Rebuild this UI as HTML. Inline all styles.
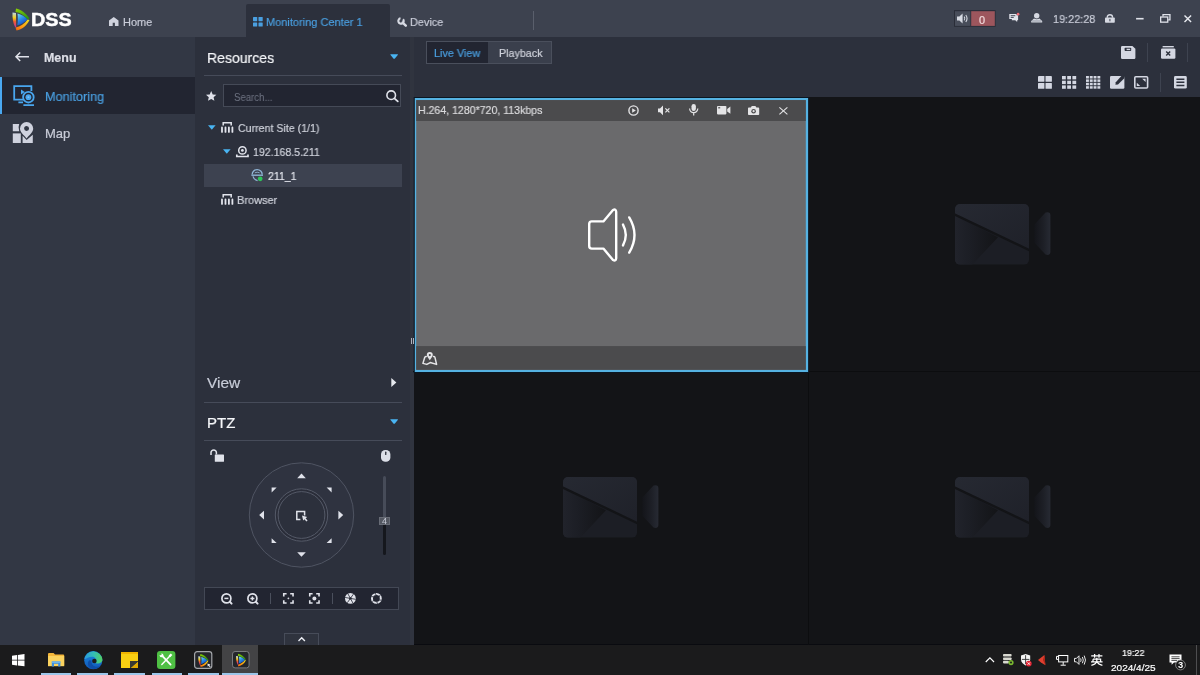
<!DOCTYPE html>
<html><head><meta charset="utf-8"><title>DSS</title>
<style>
*{box-sizing:border-box;margin:0;padding:0}
html,body{width:1200px;height:675px;overflow:hidden;background:#131417;font-family:"Liberation Sans",sans-serif;color:#d8dae0}
.a{position:absolute}
.t{position:absolute;white-space:nowrap;line-height:1;transform-origin:0 0;will-change:transform}
svg{position:absolute;overflow:visible}
</style></head><body>
<!-- backgrounds -->
<div class="a" style="left:0;top:0;width:1200px;height:37px;background:#3d424f"></div>
<div class="a" style="left:246px;top:4px;width:144px;height:33px;background:#2c303c;border-radius:2px 2px 0 0"></div>
<div class="a" style="left:533px;top:11px;width:1px;height:19px;background:#5a5f6c"></div>
<div class="a" style="left:0;top:37px;width:195px;height:608px;background:#323744"></div>
<div class="a" style="left:0;top:77px;width:195px;height:37px;background:#222531"></div>
<div class="a" style="left:0;top:77px;width:2px;height:37px;background:#4aa8f0"></div>
<div class="a" style="left:195px;top:37px;width:215px;height:608px;background:#2c303c"></div>
<div class="a" style="left:410px;top:37px;width:4px;height:608px;background:#30343f"></div>
<div class="a" style="left:414px;top:37px;width:786px;height:60px;background:#2c303c"></div>
<div class="a" style="left:414px;top:97px;width:786px;height:548px;background:#131417"></div>
<div class="a" style="left:414px;top:643.5px;width:786px;height:1.5px;background:#0a0b10"></div>
<div class="a" style="left:0;top:645px;width:1200px;height:30px;background:#1b1b1c"></div>
<!-- resources panel -->
<div class="a" style="left:204px;top:75px;width:198px;height:1px;background:#464b59"></div>
<div class="a" style="left:223.4px;top:84.4px;width:178px;height:23px;background:#222531;border:1px solid #454a57"></div>
<div class="a" style="left:204px;top:164px;width:198px;height:23.4px;background:#3d4250"></div>
<div class="a" style="left:204px;top:402px;width:198px;height:1px;background:#464b59"></div>
<div class="a" style="left:204px;top:440px;width:198px;height:1px;background:#464b59"></div>
<div class="a" style="left:204px;top:587px;width:195px;height:23px;background:#222531;border:1px solid #434855"></div>
<div class="a" style="left:270px;top:593px;width:1px;height:11px;background:#4a4f5c"></div>
<div class="a" style="left:332px;top:593px;width:1px;height:11px;background:#4a4f5c"></div>
<div class="a" style="left:284px;top:633px;width:35px;height:12px;background:#2f333e;border:1px solid #474c59;border-bottom:none"></div>
<!-- live view buttons -->
<div class="a" style="left:426px;top:41px;width:126px;height:23px;background:#3a3f4c;border:1px solid #4a4f5c"></div>
<div class="a" style="left:427px;top:42px;width:61px;height:21px;background:#222531"></div>
<!-- toolbar separators -->
<div class="a" style="left:1147px;top:43px;width:1px;height:19px;background:#3e4350"></div>
<div class="a" style="left:1187px;top:43px;width:1px;height:19px;background:#3e4350"></div>
<div class="a" style="left:1160px;top:73px;width:1px;height:19px;background:#3e4350"></div>
<!-- title alarm box -->
<svg style="left:950px;top:8px" width="50" height="22" viewBox="950 8 50 22"><rect x="954" y="10.1" width="41.6" height="16.7" fill="#2a2d38"/><rect x="955" y="11.2" width="15.4" height="14.7" fill="#484d5a"/><rect x="971.2" y="11.2" width="23.6" height="14.7" fill="#9d565d"/></svg>
<!-- grid dividers -->
<div class="a" style="left:808px;top:97px;width:1px;height:548px;background:#0c0d0f"></div>
<div class="a" style="left:413px;top:371px;width:787px;height:1px;background:#0c0d0f"></div>
<!-- video pane 1 -->
<svg style="left:410px;top:94px" width="404" height="284" viewBox="410 94 404 284">
<rect x="413.7" y="97" width="395.3" height="276" fill="#0a1622"/>
<rect x="414.8" y="98" width="393.3" height="274" fill="#55b2e2"/>
<rect x="416.2" y="100.1" width="389.6" height="269.7" fill="#6a6a6c"/>
<rect x="416.2" y="100.1" width="389.6" height="20.9" fill="#4b4b4d"/>
<rect x="416.2" y="346.1" width="389.6" height="23.7" fill="#4b4b4d"/>
</svg>
<!-- taskbar -->
<div class="a" style="left:222px;top:645px;width:36px;height:30px;background:#434345"></div>
<div class="a" style="left:41px;top:673px;width:30px;height:2px;background:#9cc6ea"></div>
<div class="a" style="left:77px;top:673px;width:31px;height:2px;background:#9cc6ea"></div>
<div class="a" style="left:114px;top:673px;width:31px;height:2px;background:#9cc6ea"></div>
<div class="a" style="left:152px;top:673px;width:30px;height:2px;background:#9cc6ea"></div>
<div class="a" style="left:188px;top:673px;width:31px;height:2px;background:#9cc6ea"></div>
<div class="a" style="left:222px;top:673px;width:36px;height:2px;background:#9cc6ea"></div>
<!-- show desktop --><div class="a" style="left:1196px;top:645px;width:1px;height:30px;background:#4e4e50"></div>
<!-- DSS logo -->
<svg style="left:12px;top:7.5px" width="18" height="23" viewBox="0 0 18 23">
<defs>
<linearGradient id="lg1" x1="0" y1="0" x2="1" y2="1"><stop offset="0" stop-color="#8fd400"/><stop offset="1" stop-color="#1f8a1a"/></linearGradient>
<linearGradient id="lg2" x1="1" y1="0" x2="0" y2="1"><stop offset="0" stop-color="#e8e020"/><stop offset="0.6" stop-color="#ff9a10"/><stop offset="1" stop-color="#f06010"/></linearGradient>
<linearGradient id="lg3" x1="0" y1="0" x2="0" y2="1"><stop offset="0" stop-color="#b8d8f0"/><stop offset="0.35" stop-color="#f0d020"/><stop offset="0.6" stop-color="#f06030"/><stop offset="1" stop-color="#c030a0"/></linearGradient>
<linearGradient id="lg4" x1="0" y1="0" x2="0.6" y2="1"><stop offset="0" stop-color="#7fe0f0"/><stop offset="0.5" stop-color="#2a8fe8"/><stop offset="1" stop-color="#1040c0"/></linearGradient>
</defs>
<path d="M4 0.5 C9 1.5 14.5 5.5 17.5 10.5 L15.5 11.5 C12 7 8 4.5 3.5 4 Z" fill="url(#lg1)"/>
<path d="M17.5 12 C15 17.5 10 21.5 4.5 22.5 L3.5 19.5 C8.5 18.5 12.5 16 15.5 11.5 Z" fill="url(#lg2)"/>
<path d="M0.5 4.5 L4 5 L4.2 19.5 L3 19 C1 15 0.3 10 0.5 4.5 Z" fill="url(#lg3)"/>
<path d="M5.5 5.5 C9.5 6.5 13 8.5 15.5 11.5 C12.5 14.5 9 16.8 5.3 17.3 C6 13.5 6 9.5 5.5 5.5 Z" fill="url(#lg4)"/>
</svg>
<!-- home -->
<svg style="left:109.3px;top:17.1px" width="9.5" height="9.1" viewBox="0 0 9.5 9.1"><path d="M4.75 0 L9.5 3.5 V9.1 H5.9 V5.7 H3.7 V9.1 H0 V3.5 Z" fill="#d0d3de"/></svg>
<!-- grid blue -->
<svg style="left:252.6px;top:17px" width="10" height="10" viewBox="0 0 10 10"><g fill="#4a9fe0"><rect x="0" y="0" width="4.2" height="4.2" rx="0.6"/><rect x="5.5" y="0" width="4.2" height="4.2" rx="0.6"/><rect x="0" y="5.4" width="4.2" height="4.2" rx="0.6"/><rect x="5.5" y="5.4" width="4.2" height="4.2" rx="0.6"/></g></svg>
<!-- wrench -->
<svg style="left:396.8px;top:16.9px" width="10" height="10" viewBox="0 0 10 10"><path d="M6.07 2.26 A2.7 2.7 0 1 1 3.53 1.34" fill="none" stroke="#d6d9e2" stroke-width="2.1"/><path d="M5.6 5.7 L8.8 8.7" stroke="#d6d9e2" stroke-width="2.5" stroke-linecap="round"/></svg>
<!-- alarm speaker -->
<svg style="left:957px;top:13px" width="12" height="11" viewBox="0 0 12 11"><path d="M0 3.6 H2.4 L5.6 0.6 V10.4 L2.4 7.4 H0 Z" fill="#d6d9e2"/><path d="M7.2 3.6 Q8.6 5.5 7.2 7.4 M8.8 2 Q11.3 5.5 8.8 9" fill="none" stroke="#d6d9e2" stroke-width="1.1"/></svg>
<!-- message -->
<svg style="left:1009.2px;top:13.2px" width="10.8" height="9.6" viewBox="0 0 11.4 10"><path d="M0.3 1 H8 V2.3 H9.6 V7.6 H8.6 V9.4 L6.6 7.6 H3 V6.4 H0.3 Z" fill="#e2e4ec"/><path d="M1.8 2.8 H6.6 M1.8 4.6 H5" stroke="#3d424f" stroke-width="1"/><circle cx="9.6" cy="1.2" r="1.4" fill="#ee6a76"/></svg>
<!-- person -->
<svg style="left:1030.8px;top:13.3px" width="11.4" height="9.6" viewBox="0 0 11.4 9.6"><circle cx="5.7" cy="2.7" r="2.7" fill="#d6d9e2"/><path d="M3 5.6 Q5.7 7 8.4 5.6 L11.2 8 V9.6 H0.2 V8 Z" fill="#d6d9e2"/><path d="M1 8 H10.4" stroke="#6a6f7c" stroke-width="0.6"/></svg>
<!-- lock -->
<svg style="left:1105px;top:14px" width="9.8" height="8.8" viewBox="0 0 9.8 8.8"><path d="M2.3 3.8 V2.9 A2.6 2.2 0 0 1 7.5 2.9 V3.8" fill="none" stroke="#d6d9e2" stroke-width="1.4"/><rect x="0" y="3.4" width="9.8" height="5.4" rx="0.8" fill="#d6d9e2"/><rect x="4.3" y="4.9" width="1.2" height="2.4" fill="#565b68"/></svg>
<!-- min/restore/close -->
<svg style="left:1136px;top:17px" width="8" height="4" viewBox="0 0 8 4"><rect x="0.1" y="0.9" width="7.5" height="1.6" fill="#e0e2ea"/></svg>
<svg style="left:1159.6px;top:13.8px" width="10.6" height="8.8" viewBox="0 0 10.6 8.8"><path d="M3 2.6 V0.65 H9.95 V5.8 H8.2" fill="none" stroke="#e0e2ea" stroke-width="1.3"/><rect x="0.65" y="3" width="7.1" height="5.15" fill="none" stroke="#e0e2ea" stroke-width="1.3"/></svg>
<svg style="left:1184.4px;top:14.8px" width="7.6" height="7.6" viewBox="0 0 7.6 7.6"><path d="M0.5 0.5 L7.1 7.1 M7.1 0.5 L0.5 7.1" stroke="#e8eaf0" stroke-width="1.4"/></svg>
<!-- back arrow -->
<svg style="left:14.6px;top:52.4px" width="14" height="9.6" viewBox="0 0 14 9.6"><path d="M14 4.8 H1.2 M5.2 0.5 L1 4.8 L5.2 9.1" fill="none" stroke="#e0e2ea" stroke-width="1.5"/></svg>
<!-- monitoring icon -->
<svg style="left:12.6px;top:84.6px" width="21.6" height="21.4" viewBox="0 0 21.6 21.4"><g fill="none" stroke="#49a6ee" stroke-width="1.8"><path d="M10 14.6 H1.2 V1.2 H18.4 V6"/><circle cx="15.4" cy="12.2" r="5.3"/><path d="M5.4 17.4 H10 M10.4 20.2 H21"/></g><circle cx="15.4" cy="12.2" r="2.9" fill="#49a6ee"/><circle cx="15.4" cy="12.2" r="0.9" fill="#7cc0f4"/><path d="M8 4.4 L11.8 7 L8 9.6 Z" fill="#49a6ee"/></svg>
<!-- map icon -->
<svg style="left:12.4px;top:122.2px" width="21.6" height="21.2" viewBox="0 0 21.6 21.2"><g fill="#cfd2de"><path d="M0.8 2 H7.2 Q5.8 5.4 7.2 9.2 H0.8 Z"/><rect x="0.8" y="11.4" width="8" height="9.6"/><path d="M10.6 21 V13.8 L14.6 18 L20.8 12.8 V21 Z"/><path d="M14.6 0 A6.6 6.6 0 0 1 21.2 6.6 C21.2 10.6 17 13.4 14.6 16.4 C12.2 13.4 8 10.6 8 6.6 A6.6 6.6 0 0 1 14.6 0 Z M14.6 4 A2.5 2.5 0 0 0 14.6 9 A2.5 2.5 0 0 0 14.6 4 Z" fill-rule="evenodd"/></g></svg>
<!-- resources header arrows -->
<svg style="left:389.7px;top:54.3px" width="8.3" height="5" viewBox="0 0 8.6 5.4"><path d="M0.6 0.3 H8 Q8.8 0.5 8.2 1.2 L4.9 5 Q4.3 5.5 3.7 5 L0.4 1.2 Q-0.2 0.5 0.6 0.3 Z" fill="#49b4f2"/></svg>
<svg style="left:391.2px;top:378.3px" width="5.4" height="9" viewBox="0 0 5.4 9"><path d="M0.3 0 L5.4 4.5 L0.3 9 Z" fill="#e6e8ee"/></svg>
<svg style="left:389.7px;top:419px" width="8.3" height="5" viewBox="0 0 8.6 5.4"><path d="M0.6 0.3 H8 Q8.8 0.5 8.2 1.2 L4.9 5 Q4.3 5.5 3.7 5 L0.4 1.2 Q-0.2 0.5 0.6 0.3 Z" fill="#49b4f2"/></svg>
<!-- star -->
<svg style="left:206.4px;top:91.4px" width="10.4" height="9.8" viewBox="0 0 10.4 9.8"><path d="M5.2 0 L6.7 3.4 L10.4 3.75 L7.6 6.2 L8.4 9.8 L5.2 7.9 L2 9.8 L2.8 6.2 L0 3.75 L3.7 3.4 Z" fill="#e0e2ea"/></svg>
<!-- magnifier -->
<svg style="left:386px;top:90.4px" width="12.6" height="12" viewBox="0 0 12.6 12"><circle cx="5.2" cy="5.2" r="4.3" fill="none" stroke="#e0e2ea" stroke-width="1.6"/><path d="M8.4 8.4 L11.8 11.4" stroke="#e0e2ea" stroke-width="1.8" stroke-linecap="round"/></svg>
<!-- tree arrows -->
<svg style="left:208px;top:125.4px" width="7.6" height="4.8" viewBox="0 0 7.6 4.8"><path d="M0 0.2 H7.6 L3.8 4.8 Z" fill="#49b4f2"/></svg>
<svg style="left:223px;top:149.3px" width="7.6" height="4.8" viewBox="0 0 7.6 4.8"><path d="M0 0.2 H7.6 L3.8 4.8 Z" fill="#49b4f2"/></svg>
<!-- site icons -->
<svg style="left:221px;top:122.2px" width="12.4" height="10" viewBox="0 0 12.4 10"><g fill="none" stroke="#e2e4ec"><path d="M2.2 3.6 V0.8 H10.2 V3.6" stroke-width="1.5"/><path d="M1 5.4 V9.9 M4.5 5.4 V9.9 M7.9 5.4 V9.9 M11.4 5.4 V9.9" stroke-width="1.8" stroke-linecap="round"/></g></svg>
<svg style="left:221px;top:194.2px" width="12.4" height="10" viewBox="0 0 12.4 10"><g fill="none" stroke="#e2e4ec"><path d="M2.2 3.6 V0.8 H10.2 V3.6" stroke-width="1.5"/><path d="M1 5.4 V9.9 M4.5 5.4 V9.9 M7.9 5.4 V9.9 M11.4 5.4 V9.9" stroke-width="1.8" stroke-linecap="round"/></g></svg>
<!-- device icon -->
<svg style="left:236.2px;top:146.4px" width="12.8" height="11.4" viewBox="0 0 12.8 11.4"><circle cx="6.4" cy="4.4" r="3.7" fill="none" stroke="#e2e4ec" stroke-width="1.5"/><circle cx="6.4" cy="4.4" r="1.4" fill="#e2e4ec"/><path d="M0.8 8.4 V10.5 H12 V8.4" fill="none" stroke="#e2e4ec" stroke-width="1.7"/></svg>
<!-- channel cam icon -->
<svg style="left:251px;top:169.4px" width="12.4" height="12.8" viewBox="0 0 12.4 12.8"><path d="M1.2 5.6 A5 5 0 0 1 11.2 5.6" fill="none" stroke="#8fb4d4" stroke-width="1.3"/><path d="M0.4 6.2 H12" stroke="#8fb4d4" stroke-width="1.4"/><path d="M2 7.4 Q3 11 6.6 11.6" fill="none" stroke="#8fb4d4" stroke-width="1.3"/><path d="M3.8 3.8 Q6.2 2.6 8.6 3.8" fill="none" stroke="#8fb4d4" stroke-width="0.9"/><circle cx="9.2" cy="9.8" r="2.4" fill="#2ec45a"/></svg>
<!-- PTZ lock/mouse -->
<svg style="left:210.4px;top:449.4px" width="14" height="12.8" viewBox="0 0 14 12.8"><path d="M1 6 V3.6 A2.7 2.7 0 0 1 6.4 3.6 V5.6" fill="none" stroke="#e0e2ea" stroke-width="1.5"/><rect x="4.8" y="5.4" width="9.2" height="7.4" rx="0.6" fill="#e0e2ea"/></svg>
<svg style="left:381px;top:449.6px" width="9.4" height="11.8" viewBox="0 0 9.4 11.8"><rect x="0" y="0" width="9.4" height="11.8" rx="4.4" fill="#dcdfe8"/><rect x="4.1" y="1.6" width="1.3" height="3.4" rx="0.6" fill="#2c303c"/></svg>
<!-- PTZ wheel -->
<svg style="left:245px;top:458px" width="114" height="114" viewBox="245 458 114 114">
<circle cx="301.5" cy="515" r="52.2" fill="#2f3340" stroke="#4f5462" stroke-width="1"/>
<circle cx="301.5" cy="515" r="26.2" fill="#2a2d39" stroke="#555a68" stroke-width="1"/>
<circle cx="301.5" cy="515" r="23.4" fill="#2c303c" stroke="#555a68" stroke-width="1"/>
<g fill="#e0e2ea">
<path d="M297.2 478.2 L305.8 478.2 L301.5 473.6 Z"/>
<path d="M297.2 552.2 L305.8 552.2 L301.5 556.8 Z"/>
<path d="M264 510.8 L264 519.4 L259.2 515.1 Z"/>
<path d="M338.4 510.8 L338.4 519.4 L343.2 515.1 Z"/>
<path d="M271.6 487.6 H276.6 L271.6 492.4 Z"/>
<path d="M331.6 487.6 H326.6 L331.6 492.4 Z"/>
<path d="M271.6 543 H276.6 L271.6 538.2 Z"/>
<path d="M331.6 543 H326.6 L331.6 538.2 Z"/>
</g>
<path d="M304.6 515.4 V511.4 H296.8 V519.4 H300.4" fill="none" stroke="#e0e2ea" stroke-width="1.5"/>
<path d="M302 515.6 L307.2 517 L305.6 518.2 L307.6 520.4 L306.4 521.4 L304.4 519.2 L303.2 520.6 Z" fill="#e0e2ea"/>
</svg>
<!-- slider -->
<div class="a" style="left:383px;top:476px;width:3px;height:42px;background:#474c59;border-radius:1.5px 1.5px 0 0"></div>
<div class="a" style="left:383px;top:518px;width:3px;height:36.5px;background:#15171d;border-radius:0 0 1.5px 1.5px"></div>
<div class="a" style="left:379.4px;top:516.6px;width:10.2px;height:8.2px;background:#535761;border:1px solid #686c76"></div>
<!-- PTZ toolbar icons -->
<svg style="left:220.8px;top:592.8px" width="11.6" height="11.6" viewBox="0 0 11.6 11.6"><circle cx="5.4" cy="5.4" r="4.5" fill="none" stroke="#e0e2ea" stroke-width="1.7"/><path d="M8.8 8.8 L10.6 10.6" stroke="#e0e2ea" stroke-width="2" stroke-linecap="round"/><path d="M3.4 5.4 H7.4" stroke="#e0e2ea" stroke-width="1.5"/></svg>
<svg style="left:246.8px;top:592.8px" width="11.6" height="11.6" viewBox="0 0 11.6 11.6"><circle cx="5.4" cy="5.4" r="4.5" fill="none" stroke="#e0e2ea" stroke-width="1.7"/><path d="M8.8 8.8 L10.6 10.6" stroke="#e0e2ea" stroke-width="2" stroke-linecap="round"/><path d="M3.4 5.4 H7.4 M5.4 3.4 V7.4" stroke="#e0e2ea" stroke-width="1.5"/></svg>
<svg style="left:283.2px;top:592.8px" width="10.8" height="10.8" viewBox="0 0 11.4 11.4"><path d="M0.8 3.8 V0.8 H3.8 M7.6 0.8 H10.6 V3.8 M10.6 7.6 V10.6 H7.6 M3.8 10.6 H0.8 V7.6" fill="none" stroke="#e0e2ea" stroke-width="1.7"/><path d="M5.7 4.8 V6.6 M4.8 5.7 H6.6" stroke="#e0e2ea" stroke-width="0.9"/></svg>
<svg style="left:309px;top:592.8px" width="10.8" height="10.8" viewBox="0 0 11.4 11.4"><path d="M0.8 3.8 V0.8 H3.8 M7.6 0.8 H10.6 V3.8 M10.6 7.6 V10.6 H7.6 M3.8 10.6 H0.8 V7.6" fill="none" stroke="#e0e2ea" stroke-width="1.7"/><circle cx="5.7" cy="5.7" r="2.1" fill="#e0e2ea"/></svg>
<svg style="left:345.2px;top:592.8px" width="10.8" height="10.8" viewBox="0 0 12 12"><circle cx="6" cy="6" r="6" fill="#e0e2ea"/><g stroke="#222531" stroke-width="0.9" fill="none"><path d="M6 6 L3.2 0.8 M6 6 L0.2 5 M6 6 L2.6 10.8 M6 6 L8.8 11.2 M6 6 L11.8 7 M6 6 L9.4 1.2"/></g><circle cx="6" cy="6" r="1.3" fill="#222531"/></svg>
<svg style="left:370.8px;top:592.8px" width="10.8" height="10.8" viewBox="0 0 12 12"><circle cx="6" cy="6" r="4.9" fill="none" stroke="#e0e2ea" stroke-width="2.2"/><g stroke="#222531" stroke-width="0.9" fill="none"><path d="M4.4 0 L6 2.6 M0.2 4 L3 4.2 M1.8 9.8 L3.2 7.4 M7.6 12 L6 9.4 M11.8 8 L9 7.8 M10.2 2.2 L8.8 4.6"/></g></svg>
<!-- collapse chevron -->
<svg style="left:298px;top:637px" width="7.4" height="4.4" viewBox="0 0 7.4 4.4"><path d="M0.5 4 L3.7 0.8 L6.9 4" fill="none" stroke="#eceef4" stroke-width="1.4"/></svg>
<!-- splitter handle -->
<div class="a" style="left:410.8px;top:338px;width:1px;height:6px;background:#b0b3be"></div>
<div class="a" style="left:412.6px;top:338px;width:1px;height:6px;background:#b0b3be"></div>
<!-- toolbar icons -->
<svg style="left:1121.2px;top:46.2px" width="14.4" height="13" viewBox="0 0 14.4 13"><path d="M1.2 0 H11.4 L14.4 2.8 V11.8 Q14.4 13 13.2 13 H1.2 Q0 13 0 11.8 V1.2 Q0 0 1.2 0 Z" fill="#d4d7e2"/><rect x="3.6" y="1.8" width="6.6" height="3.2" rx="0.8" fill="#2c303c"/><rect x="5.6" y="2.7" width="3.6" height="1.4" fill="#d4d7e2"/></svg>
<svg style="left:1161px;top:46.2px" width="14.4" height="12.8" viewBox="0 0 14.4 12.8"><rect x="1.6" y="0" width="11.2" height="1.4" fill="#d4d7e2"/><path d="M1.2 2.4 H13.2 Q14.4 2.4 14.4 3.6 V11.6 Q14.4 12.8 13.2 12.8 H1.2 Q0 12.8 0 11.6 V3.6 Q0 2.4 1.2 2.4 Z" fill="#d4d7e2"/><path d="M5.2 5.6 L9.2 9.6 M9.2 5.6 L5.2 9.6" stroke="#2c303c" stroke-width="1.4"/></svg>
<svg style="left:1038px;top:76.2px" width="14" height="12.8" viewBox="0 0 14 12.8"><g fill="#d4d7e2"><rect x="0" y="0" width="6.4" height="5.8" rx="0.5"/><rect x="7.5" y="0" width="6.4" height="5.8" rx="0.5"/><rect x="0" y="6.9" width="6.4" height="5.8" rx="0.5"/><rect x="7.5" y="6.9" width="6.4" height="5.8" rx="0.5"/></g></svg>
<svg style="left:1061.8px;top:76.2px" width="14.4" height="12.8" viewBox="0 0 14.4 12.8"><g fill="#d4d7e2"><rect x="0" y="0" width="3.8" height="3.4"/><rect x="5.2" y="0" width="3.8" height="3.4"/><rect x="10.4" y="0" width="3.8" height="3.4"/><rect x="0" y="4.7" width="3.8" height="3.4"/><rect x="5.2" y="4.7" width="3.8" height="3.4"/><rect x="10.4" y="4.7" width="3.8" height="3.4"/><rect x="0" y="9.4" width="3.8" height="3.4"/><rect x="5.2" y="9.4" width="3.8" height="3.4"/><rect x="10.4" y="9.4" width="3.8" height="3.4"/></g></svg>
<svg style="left:1086px;top:76.2px" width="14.4" height="12.8" viewBox="0 0 14.4 12.8"><g fill="#d4d7e2"><rect x="0" y="0" width="2.9" height="2.5"/><rect x="3.8" y="0" width="2.9" height="2.5"/><rect x="7.6" y="0" width="2.9" height="2.5"/><rect x="11.4" y="0" width="2.9" height="2.5"/><rect x="0" y="3.4" width="2.9" height="2.5"/><rect x="3.8" y="3.4" width="2.9" height="2.5"/><rect x="7.6" y="3.4" width="2.9" height="2.5"/><rect x="11.4" y="3.4" width="2.9" height="2.5"/><rect x="0" y="6.8" width="2.9" height="2.5"/><rect x="3.8" y="6.8" width="2.9" height="2.5"/><rect x="7.6" y="6.8" width="2.9" height="2.5"/><rect x="11.4" y="6.8" width="2.9" height="2.5"/><rect x="0" y="10.2" width="2.9" height="2.5"/><rect x="3.8" y="10.2" width="2.9" height="2.5"/><rect x="7.6" y="10.2" width="2.9" height="2.5"/><rect x="11.4" y="10.2" width="2.9" height="2.5"/></g></svg>
<svg style="left:1109.6px;top:76.2px" width="14.4" height="12.8" viewBox="0 0 14.4 12.8"><rect x="0" y="0" width="14.4" height="12.8" rx="1.2" fill="#d4d7e2"/><path d="M11.6 -0.2 L14.6 -0.2 L14.6 2 L8 8.4 L5.4 8.8 L5.8 6.2 Z" fill="#2c303c"/></svg>
<svg style="left:1133.6px;top:76.2px" width="14.4" height="12.8" viewBox="0 0 14.4 12.8"><rect x="0.8" y="0.8" width="12.8" height="11.2" rx="1" fill="none" stroke="#d4d7e2" stroke-width="1.6"/><path d="M8.2 2.8 H11.6 V6 Z M6.2 10 H2.8 V6.8 Z" fill="#d4d7e2"/></svg>
<svg style="left:1174.2px;top:76.4px" width="12.8" height="12.6" viewBox="0 0 12.8 12.6"><rect x="0" y="0" width="12.8" height="12.6" rx="1.4" fill="#d4d7e2"/><path d="M2.4 3.2 H10.4 M2.4 6.3 H10.4 M2.4 9.4 H10.4" stroke="#2c303c" stroke-width="1.5"/></svg>
<!-- video header icons -->
<svg style="left:628.2px;top:104.8px" width="11" height="11" viewBox="0 0 11 11"><circle cx="5.5" cy="5.5" r="4.6" fill="none" stroke="#e4e4e6" stroke-width="1.4"/><path d="M4.2 3.2 L7.8 5.5 L4.2 7.8 Z" fill="#e4e4e6"/></svg>
<svg style="left:657.6px;top:105px" width="12.4" height="10.6" viewBox="0 0 12.4 10.6"><path d="M0 3.4 H2 L5 0.4 V10.2 L2 7.2 H0 Z" fill="#e4e4e6"/><path d="M7.4 3.4 L11.4 7.4 M11.4 3.4 L7.4 7.4" stroke="#e4e4e6" stroke-width="1.2"/></svg>
<svg style="left:689.4px;top:104.4px" width="9.4" height="11.4" viewBox="0 0 9.4 11.4"><rect x="2.5" y="0" width="4.4" height="7" rx="2.2" fill="#e4e4e6"/><path d="M0.6 4.6 A4.1 4.1 0 0 0 8.8 4.6 M4.7 8.8 V11.4" fill="none" stroke="#e4e4e6" stroke-width="1.2"/></svg>
<svg style="left:717.2px;top:106.2px" width="13.4" height="8.4" viewBox="0 0 13.4 8.4"><rect x="0" y="0" width="9.4" height="8.4" rx="0.8" fill="#e4e4e6"/><path d="M10.2 3 L13.4 0.6 V7.8 L10.2 5.4 Z" fill="#e4e4e6"/><rect x="1.2" y="1.2" width="2" height="1.2" fill="#4b4b4d"/></svg>
<svg style="left:748px;top:106px" width="11.2" height="9" viewBox="0 0 11.2 9"><path d="M0.8 1.6 H2.8 L3.8 0 H7.4 L8.4 1.6 H10.4 Q11.2 1.6 11.2 2.4 V8.2 Q11.2 9 10.4 9 H0.8 Q0 9 0 8.2 V2.4 Q0 1.6 0.8 1.6 Z" fill="#e4e4e6"/><circle cx="5.6" cy="5.2" r="2.3" fill="#4b4b4d"/><circle cx="5.6" cy="5.2" r="1.1" fill="#e4e4e6"/></svg>
<svg style="left:779.2px;top:106.8px" width="8.8" height="7.8" viewBox="0 0 8.8 7.8"><path d="M0.4 0.4 L8.4 7.4 M8.4 0.4 L0.4 7.4" stroke="#e4e4e6" stroke-width="1.1"/></svg>
<!-- big speaker -->
<svg style="left:587px;top:207px" width="54" height="56" viewBox="587 207 54 56"><g fill="none" stroke="#ffffff" stroke-width="2.4" stroke-linejoin="round" stroke-linecap="round"><path d="M591.8 221.4 H603.4 L613 210 Q616 208.6 616.2 211.8 V258.2 Q616 261.4 613 260 L603.4 248.6 H591.8 Q589.2 248.6 589.2 246 V224 Q589.2 221.4 591.8 221.4 Z"/><path d="M623 224.6 Q628.6 235 623 245.4"/><path d="M629.2 217.4 Q639.8 235 629.2 252.6"/></g></svg>
<!-- footer map icon -->
<svg style="left:422px;top:352px" width="15.6" height="13.2" viewBox="0 0 15.6 13.2"><path d="M4.2 4.6 Q3 4.4 2.7 5.6 L0.9 11.4 L4.8 12.4 L8.2 10.6 L14.6 12.4 L13 5.6 Q12.8 4.4 11.6 4.6" fill="none" stroke="#e6e6e8" stroke-width="1.5" stroke-linejoin="round" stroke-linecap="round"/><path d="M7.8 0 A3 3 0 0 1 10.8 3 C10.8 4.8 8.8 6.4 7.8 8.2 C6.8 6.4 4.8 4.8 4.8 3 A3 3 0 0 1 7.8 0 Z M7.8 2 A1.1 1.1 0 0 0 7.8 4.2 A1.1 1.1 0 0 0 7.8 2 Z" fill="#e6e6e8" fill-rule="evenodd"/></svg>
<!-- camera placeholders -->
<svg width="0" height="0"><defs>
<linearGradient id="cg1" x1="0" y1="0" x2="1" y2="1"><stop offset="0" stop-color="#262932"/><stop offset="1" stop-color="#1f2129"/></linearGradient>
<linearGradient id="cg2" x1="0" y1="0" x2="1" y2="0"><stop offset="0" stop-color="#14151a"/><stop offset="0.55" stop-color="#1d1f26"/><stop offset="1" stop-color="#272a33"/></linearGradient>
<linearGradient id="cg3" x1="0" y1="0" x2="1" y2="0"><stop offset="0" stop-color="#21232b"/><stop offset="0.35" stop-color="#1c1e25"/><stop offset="1" stop-color="#131417"/></linearGradient>
<clipPath id="camclip"><rect x="0" y="0" width="74" height="60.6" rx="5"/></clipPath>
<g id="camph">
<g clip-path="url(#camclip)">
<rect x="0" y="0" width="74" height="61" fill="#1c1e25"/>
<path d="M0 0 H74 V44.7 L0 9.4 Z" fill="url(#cg1)"/>
<path d="M0 11.6 L43 33.2 L17 61 H0 Z" fill="url(#cg3)"/>
<path d="M0 9.4 L74 44.7 V47.2 L0 11.9 Z" fill="#131417"/>
</g>
<path d="M79.4 20.5 L90.5 8.6 Q95.4 7.4 95.4 11.4 V47.8 Q95.4 51.8 90.5 50.6 L79.4 38.7 Z" fill="url(#cg2)"/>
</g></defs></svg>
<svg style="left:955.2px;top:203.8px" width="96" height="61" viewBox="0 0 96 61"><use href="#camph"/></svg>
<svg style="left:563.4px;top:477px" width="96" height="61" viewBox="0 0 96 61"><use href="#camph"/></svg>
<svg style="left:955.4px;top:477px" width="96" height="61" viewBox="0 0 96 61"><use href="#camph"/></svg>
<!-- taskbar icons -->
<svg style="left:11.7px;top:653.7px" width="12.5" height="12.3" viewBox="0 0 12.8 12.6"><g fill="#ffffff"><path d="M0 1.8 L5.2 1 V6 H0 Z"/><path d="M6 0.9 L12.8 0 V6 H6 Z"/><path d="M0 6.7 H5.2 V11.7 L0 10.9 Z"/><path d="M6 6.7 H12.8 V12.6 L6 11.8 Z"/></g></svg>
<svg style="left:48px;top:653px" width="16.2" height="13.6" viewBox="0 0 16.2 13.6"><path d="M0 1 Q0 0 1 0 H5.6 L7 1.6 H15.2 Q16.2 1.6 16.2 2.6 V12.6 H0 Z" fill="#f5b73a"/><rect x="0" y="3" width="16.2" height="10.2" fill="#fbd35f"/><path d="M3.8 13.4 V8.4 H12.4 V13.4 H10.2 V10.8 H6 V13.4 Z" fill="#3f8fe0"/><rect x="3.8" y="8.4" width="8.6" height="1.6" fill="#6ab4f0"/></svg>
<svg style="left:84px;top:651px" width="18.6" height="18.4" viewBox="0 0 18.6 18.4"><defs><linearGradient id="eg1" x1="0" y1="0" x2="1" y2="0"><stop offset="0" stop-color="#2a9ae0"/><stop offset="0.55" stop-color="#35c0b0"/><stop offset="1" stop-color="#55d060"/></linearGradient><linearGradient id="eg2" x1="0" y1="0" x2="0" y2="1"><stop offset="0" stop-color="#1a8ae0"/><stop offset="1" stop-color="#1258b8"/></linearGradient></defs><circle cx="9.3" cy="9.2" r="9.1" fill="url(#eg2)"/><path d="M0.4 8 A9.1 9.1 0 0 1 18.4 8.6 C18.4 11.4 16 12.6 13.6 12.6 C11.8 12.6 11 11.6 11.6 10.4 C12.6 8.6 11.4 5.8 8.2 5.8 C4.6 5.8 1.4 8.4 0.4 8 Z" fill="url(#eg1)"/><path d="M7.6 9.4 C6.8 12.6 9.4 16 13.4 15.8 C14.8 15.7 16 15.2 16.8 14.6 C14.6 18 9.6 19 6 16.6 C3.4 14.8 3.2 11 5.4 9.2 Z" fill="#0e4ea8"/><circle cx="10.4" cy="10" r="2.3" fill="#1c1c1c"/></svg>
<svg style="left:121.4px;top:652px" width="17" height="16" viewBox="0 0 17 16"><rect x="0" y="0" width="17" height="16" fill="#f9cf12"/><rect x="0" y="0" width="17" height="2" fill="#f0b400"/><path d="M9 9 H17 V10 L10 16 H9 Z" fill="#3a3a32"/><path d="M17 10 V16 H10 Z" fill="#e0a800"/></svg>
<svg style="left:157.4px;top:651px" width="18.4" height="18" viewBox="0 0 18.4 18"><rect x="0" y="0" width="18.4" height="18" rx="3" fill="#4fc044"/><g stroke="#ffffff" stroke-width="1.8" stroke-linecap="round"><path d="M5 4.6 L13.6 13.6"/><path d="M13.4 4.4 L4.8 13.6" stroke-width="1.4"/></g><circle cx="4.6" cy="4.4" r="1.9" fill="#ffffff"/><circle cx="3.6" cy="3.2" r="1" fill="#4fc044"/><path d="M12.4 5.4 L14.6 3.2" stroke="#fff" stroke-width="2.2"/></svg>
<svg width="0" height="0"><defs><g id="dsslogo">
<path d="M4 0.5 C9 1.5 14.5 5.5 17.5 10.5 L15.5 11.5 C12 7 8 4.5 3.5 4 Z" fill="url(#lg1)"/>
<path d="M17.5 12 C15 17.5 10 21.5 4.5 22.5 L3.5 19.5 C8.5 18.5 12.5 16 15.5 11.5 Z" fill="url(#lg2)"/>
<path d="M0.5 4.5 L4 5 L4.2 19.5 L3 19 C1 15 0.3 10 0.5 4.5 Z" fill="url(#lg3)"/>
<path d="M5.5 5.5 C9.5 6.5 13 8.5 15.5 11.5 C12.5 14.5 9 16.8 5.3 17.3 C6 13.5 6 9.5 5.5 5.5 Z" fill="url(#lg4)"/>
</g></defs></svg>
<svg style="left:194px;top:651px" width="18.4" height="18" viewBox="0 0 18.4 18"><rect x="0.6" y="0.6" width="17.2" height="16.8" rx="2.6" fill="#24262b" stroke="#a4a6aa" stroke-width="1.2"/><g transform="translate(4,2.6) scale(0.6)"><use href="#dsslogo"/></g><path d="M13.4 12.6 L16.4 13.4 L15.4 14.2 L16.6 15.6 L15.8 16.2 L14.6 14.8 L13.8 15.8 Z" fill="#e8e8ea"/></svg>
<svg style="left:231.5px;top:651px" width="17.6" height="17.4" viewBox="0 0 17.6 17.4"><rect x="0.5" y="0.5" width="16.6" height="16.4" rx="2.6" fill="#24262b" stroke="#7a7b80" stroke-width="1"/><g transform="translate(3.8,2.4) scale(0.58)"><use href="#dsslogo"/></g></svg>
<!-- tray -->
<svg style="left:984.8px;top:657.2px" width="9.8" height="5.4" viewBox="0 0 9 5.2"><path d="M0.5 4.8 L4.5 0.8 L8.5 4.8" fill="none" stroke="#ffffff" stroke-width="1.1"/></svg>
<svg style="left:1003px;top:654.4px" width="11" height="11.4" viewBox="0 0 11 11.4"><g fill="#d8d8d0"><rect x="0" y="0" width="8.6" height="2.6" rx="0.8"/><rect x="0" y="3.4" width="8.6" height="2.6" rx="0.8"/><rect x="0" y="6.8" width="6" height="2.6" rx="0.8"/></g><circle cx="8" cy="8.6" r="2.6" fill="#7ab830"/><circle cx="8" cy="8.6" r="1" fill="#1c1c1c"/></svg>
<svg style="left:1021px;top:654.4px" width="11" height="12.6" viewBox="0 0 11 12.6"><path d="M4.6 0 L9.2 1.4 V5.6 C9.2 8.4 7 10.4 4.6 11.4 C2.2 10.4 0 8.4 0 5.6 V1.4 Z" fill="#f4f4f4"/><path d="M4.6 1.2 V10.2 M0.8 5.4 H8.4" stroke="#303030" stroke-width="0.9"/><circle cx="7.8" cy="9.6" r="2.9" fill="#e02030"/><path d="M6.6 8.4 L9 10.8 M9 8.4 L6.6 10.8" stroke="#ffffff" stroke-width="0.9"/></svg>
<svg style="left:1038.4px;top:655px" width="7.4" height="10.2" viewBox="0 0 7.4 10.2"><path d="M0 5 L6.4 0 L7.4 10.2 L3 7.4 Z" fill="#e04030"/><path d="M6.4 0 L7.4 10.2 L5 5 Z" fill="#a82418"/></svg>
<svg style="left:1056px;top:655px" width="12.4" height="10.8" viewBox="0 0 12.4 10.8"><g fill="none" stroke="#ffffff" stroke-width="1"><rect x="2.6" y="0.5" width="9.2" height="6.4"/><path d="M7.2 7 V9.8 M4.6 10.2 H9.8"/><path d="M0.5 1.4 H2.4 M0.5 1.4 V4.4 H2.4"/></g></svg>
<svg style="left:1074px;top:655px" width="12.6" height="10.2" viewBox="0 0 12.6 10.2"><path d="M0.5 3.4 H2.4 L5 0.8 V9.4 L2.4 6.8 H0.5 Z" fill="none" stroke="#ffffff" stroke-width="0.9"/><path d="M6.6 3.4 Q7.6 5.1 6.6 6.8 M8.4 2 Q10.2 5.1 8.4 8.2 M10.2 0.6 Q12.8 5.1 10.2 9.6" fill="none" stroke="#ffffff" stroke-width="0.9"/></svg>
<!-- 英 -->
<svg style="left:1091px;top:654.2px" width="11.6" height="11.6" viewBox="0 0 11.6 11.6"><g fill="none" stroke="#ffffff" stroke-width="1.25"><path d="M0.2 2 H11.4 M3.6 0 V3.8 M8 0 V3.8"/><path d="M2 5.2 H9.6 V7.6 M2 5.2 V7.6 M0 7.8 H11.6 M5.8 3.8 V7.8"/><path d="M5.6 7.8 Q4.6 10.4 0.4 11.4 M6 7.8 Q7.2 10.4 11.4 11.4"/></g></svg>
<!-- notification -->
<svg style="left:1169px;top:654.4px" width="17" height="17" viewBox="0 0 17 17"><path d="M0.5 0.5 H12.5 V8.5 H5 L2.6 10.8 V8.5 H0.5 Z" fill="#ffffff"/><path d="M2.4 2.8 H10.6 M2.4 4.6 H10.6 M2.4 6.4 H8" stroke="#1c1c1c" stroke-width="0.8"/><circle cx="11.5" cy="11" r="4.9" fill="#1b1b1c" stroke="#8a8a8a" stroke-width="0.9"/></svg>
<div class="t" style="-webkit-text-stroke:0.45px #fff;left:30.70px;top:12.09px;font-size:17.5px;font-weight:bold;color:#ffffff;transform:scaleX(1.1283)">DSS</div>
<div class="t" style="-webkit-text-stroke:0.2px #c9ccd8;left:122.74px;top:17.29px;font-size:11px;font-weight:normal;color:#c9ccd8;transform:scaleX(0.9954)">Home</div>
<div class="t" style="-webkit-text-stroke:0.2px #4a9fe0;left:266.31px;top:16.87px;font-size:11.5px;font-weight:normal;color:#4a9fe0;transform:scaleX(0.9571)">Monitoring Center 1</div>
<div class="t" style="-webkit-text-stroke:0.2px #c9ccd8;left:410.31px;top:16.87px;font-size:11.5px;font-weight:normal;color:#c9ccd8;transform:scaleX(0.9462)">Device</div>
<div class="t" style="-webkit-text-stroke:0.2px #dcdee6;left:43.68px;top:52.44px;font-size:12px;font-weight:bold;color:#dcdee6;transform:scaleX(1.0375)">Menu</div>
<div class="t" style="-webkit-text-stroke:0.2px #4a9fe0;left:44.52px;top:89.50px;font-size:13px;font-weight:normal;color:#4a9fe0;transform:scaleX(0.9741)">Monitoring</div>
<div class="t" style="-webkit-text-stroke:0.2px #c9ccd8;left:44.52px;top:127.00px;font-size:13px;font-weight:normal;color:#c9ccd8;transform:scaleX(0.9934)">Map</div>
<div class="t" style="-webkit-text-stroke:0.2px #f6f7fa;left:206.60px;top:50.00px;font-size:15px;font-weight:normal;color:#f6f7fa;transform:scaleX(0.9365)">Resources</div>
<div class="t" style="left:233.70px;top:93.13px;font-size:10px;font-weight:normal;color:#6e7382;transform:scaleX(0.9617)">Search...</div>
<div class="t" style="-webkit-text-stroke:0.2px #d0d3dc;left:237.70px;top:123.17px;font-size:11.5px;font-weight:normal;color:#d0d3dc;transform:scaleX(0.9240)">Current Site (1/1)</div>
<div class="t" style="-webkit-text-stroke:0.2px #d0d3dc;left:252.71px;top:147.27px;font-size:11.5px;font-weight:normal;color:#d0d3dc;transform:scaleX(0.9197)">192.168.5.211</div>
<div class="t" style="-webkit-text-stroke:0.2px #e4e6ee;left:267.70px;top:171.27px;font-size:11.5px;font-weight:normal;color:#e4e6ee;transform:scaleX(0.9152)">211_1</div>
<div class="t" style="-webkit-text-stroke:0.2px #d0d3dc;left:237.31px;top:195.27px;font-size:11.5px;font-weight:normal;color:#d0d3dc;transform:scaleX(0.9544)">Browser</div>
<div class="t" style="-webkit-text-stroke:0.2px #c8ccd8;left:206.60px;top:375.40px;font-size:15px;font-weight:normal;color:#c8ccd8;transform:scaleX(1.0279)">View</div>
<div class="t" style="-webkit-text-stroke:0.2px #f6f7fa;left:206.60px;top:414.50px;font-size:15px;font-weight:normal;color:#f6f7fa;transform:scaleX(0.9896)">PTZ</div>
<div class="t" style="-webkit-text-stroke:0.2px #4a9fe0;left:434.34px;top:48.29px;font-size:11px;font-weight:normal;color:#4a9fe0;transform:scaleX(0.9855)">Live View</div>
<div class="t" style="-webkit-text-stroke:0.2px #d0d3dc;left:498.84px;top:48.29px;font-size:11px;font-weight:normal;color:#d0d3dc;transform:scaleX(0.9724)">Playback</div>
<div class="t" style="-webkit-text-stroke:0.2px #dcdcde;left:417.84px;top:105.49px;font-size:11px;font-weight:normal;color:#dcdcde;transform:scaleX(0.9609)">H.264, 1280*720, 113kbps</div>
<div class="t" style="-webkit-text-stroke:0.2px #c9ccd8;left:1053.11px;top:14.17px;font-size:11.5px;font-weight:normal;color:#c9ccd8;transform:scaleX(0.9464)">19:22:28</div>
<div class="t" style="-webkit-text-stroke:0.2px #f2dcde;left:979.30px;top:14.69px;font-size:11px;font-weight:normal;color:#f2dcde;transform:scaleX(0.9796)">0</div>
<div class="t" style="-webkit-text-stroke:0.2px #ffffff;left:1121.70px;top:648.07px;font-size:9.6px;font-weight:normal;color:#ffffff;transform:scaleX(0.9327)">19:22</div>
<div class="t" style="-webkit-text-stroke:0.2px #ffffff;left:1110.70px;top:662.97px;font-size:9.6px;font-weight:normal;color:#ffffff;transform:scaleX(1.0448)">2024/4/25</div>
<div class="t" style="left:382.00px;top:516.98px;font-size:9px;font-weight:normal;color:#c8ccd8;transform:scaleX(0.9969)">4</div>
<div class="t" style="left:1178.00px;top:660.80px;font-size:8.5px;font-weight:bold;color:#ffffff;transform:scaleX(1.0983)">3</div>
</body></html>
